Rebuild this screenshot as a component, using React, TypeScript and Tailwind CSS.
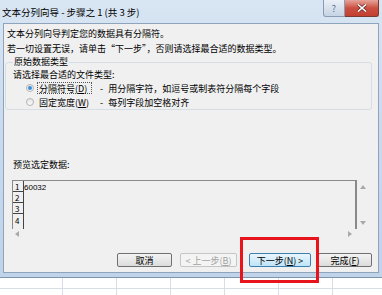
import React from 'react';

const FONT = "font-['Noto_Sans_CJK_SC','Liberation_Sans',sans-serif]";

const Key = ({ k }: { k: string }) => (
  <span>
    (<span className="underline underline-offset-1">{k}</span>)
  </span>
);

const Btn = ({ w, kind, children }: { w: string; kind: 'normal' | 'off' | 'hot'; children: React.ReactNode }) => {
  const styles = {
    normal: 'border-[#707070] bg-gradient-to-b from-[#f4f4f4] to-[#dcdcdc] text-black',
    off: 'border-[#c6c6c6] bg-[#f4f4f4] text-[#a3a3a3]',
    hot: 'border-[#3c7fb1] bg-gradient-to-b from-[#eaf6fd] to-[#bee4f8] text-black',
  };
  return (
    <div
      className={`${w} h-[14px] rounded-[2px] border flex items-center justify-center text-[9px] leading-none ${styles[kind]}`}
    >
      {children}
    </div>
  );
};

const Radio = ({ on }: { on?: boolean }) => (
  <div className="w-[8px] h-[8px] rounded-full border border-[#b4b4b4] bg-gradient-to-b from-[#e6e6e6] to-[#fafafa] flex items-center justify-center">
    {on && <div className="w-[4px] h-[4px] rounded-full bg-[#3c8fdc]" />}
  </div>
);

const Tri = ({ dir }: { dir: 'up' | 'down' | 'left' | 'right' }) => {
  const pts = {
    up: '0,4 3,0 6,4',
    down: '0,0 3,4 6,0',
    left: '4,0 0,3 4,6',
    right: '0,0 4,3 0,6',
  };
  const vertical = dir === 'up' || dir === 'down';
  return (
    <svg width={vertical ? 6 : 4} height={vertical ? 4 : 6}>
      <polygon points={pts[dir]} fill="#a9a9a9" />
    </svg>
  );
};

export default function App() {
  const rows = ['1', '2', '3', '4'];
  return (
    <div className={`relative w-[382px] h-[295px] overflow-hidden bg-white text-black ${FONT}`}>
      {/* Dialog window */}
      <div className="h-[278px] flex flex-col bg-gradient-to-b from-[#d8e5f3] via-[#c9daed] to-[#bfd3e9] border-b border-[#7f95ad]">
        {/* Title bar */}
        <div className="h-[23px] flex items-start shrink-0">
          <div className="pl-[2px] pt-[6px] text-[9.5px] leading-[12px] whitespace-nowrap">
            文本分列向导 - 步骤之 1 (共 3 步)
          </div>
          <div className="ml-auto mr-[3px] flex">
            <div className="w-[22px] h-[17px] rounded-bl-[3px] border border-t-0 border-[#8a9cb2] bg-gradient-to-b from-[#eaf0f7] to-[#c6d4e4] flex items-center justify-center text-[9px] text-[#5a6f88] leading-none">
              ?
            </div>
            <div className="w-[34px] h-[17px] rounded-br-[3px] border border-t-0 border-l-0 border-[#7a3a34] bg-gradient-to-b from-[#e4a39a] via-[#cb4f42] to-[#c33f30] flex items-center justify-center">
              <svg width="10" height="8" viewBox="0 0 10 8">
                <path d="M1 0.5 L9 7.5 M9 0.5 L1 7.5" stroke="#6b2a24" strokeWidth="3" />
                <path d="M1 0.5 L9 7.5 M9 0.5 L1 7.5" stroke="#fff" strokeWidth="1.6" />
              </svg>
            </div>
          </div>
        </div>

        {/* Client area */}
        <div className="flex-1 mx-[3px] mb-[4px] bg-[#f0f0f0] border border-[#8ea4bc] flex flex-col text-[9px]">
          <div className="pt-[2px] pl-[3px] leading-[15px]">
            <div>文本分列向导判定您的数据具有分隔符。</div>
            <div>若一切设置无误，请单击“下一步”，否则请选择最合适的数据类型。</div>
          </div>

          <fieldset className="ml-[1px] w-[367px] border border-[#d5dfe5] rounded-[3px] pl-[7px] pb-[1px]">
            <legend className="px-[1px] leading-[12px]">原始数据类型</legend>
            <div className="leading-[12px] pt-[1px]">请选择最合适的文件类型:</div>
            <div className="flex items-center h-[12px] mt-[1px]">
              <div className="ml-[13px]">
                <Radio on />
              </div>
              <div className="ml-[3px] w-[55px] h-[12px] border border-dotted border-[#555] flex items-center pl-[1px] leading-none">
                分隔符号
                <Key k="D" />
              </div>
              <div className="ml-[8px] leading-none">-</div>
              <div className="ml-[5px] leading-none">用分隔字符，如逗号或制表符分隔每个字段</div>
            </div>
            <div className="flex items-center h-[12px] mt-[2px]">
              <div className="ml-[13px]">
                <Radio />
              </div>
              <div className="ml-[4px] w-[54px] flex items-center pl-[1px] leading-none">
                固定宽度
                <Key k="W" />
              </div>
              <div className="ml-[8px] leading-none">-</div>
              <div className="ml-[5px] leading-none">每列字段加空格对齐</div>
            </div>
          </fieldset>

          <div className="mt-[49px] ml-[9px] leading-[12px]">预览选定数据:</div>

          {/* Preview */}
          <div className="mt-[9px] ml-[8px] w-[357px] h-[59px] grid grid-cols-[345px_12px] grid-rows-[49px_10px]">
            <div className="border-t border-l border-r-2 border-[#8a8a8a] bg-[#f0f0f0] flex overflow-hidden">
              <div className="w-[11px] shrink-0 border-r border-[#444] flex flex-col">
                {rows.map((r, i) => (
                  <div
                    key={r}
                    className={`h-[11px] shrink-0 flex items-end pl-[2px] text-[8px] leading-[9px] ${i < 3 ? 'border-b border-[#444]' : ''}`}
                  >
                    {r}
                  </div>
                ))}
              </div>
              <div className="pt-[2px] text-[8px] leading-[9px] font-['Liberation_Sans',sans-serif]">60032</div>
            </div>
            <div className="flex flex-col items-center justify-between pt-[5px] pb-[4px]">
              <Tri dir="up" />
              <Tri dir="down" />
            </div>
            <div className="flex items-center justify-between px-[3px] pr-[5px]">
              <Tri dir="left" />
              <Tri dir="right" />
            </div>
            <div />
          </div>

          <div className="mt-[14px] flex justify-end pr-[6px]">
            <Btn w="w-[55px]" kind="normal">取消</Btn>
            <div className="ml-[8px]">
              <Btn w="w-[57px]" kind="off">
                &lt; 上一步<Key k="B" />
              </Btn>
            </div>
            <div className="ml-[12px]">
              <Btn w="w-[62px]" kind="hot">
                下一步<Key k="N" />&nbsp;&gt;
              </Btn>
            </div>
            <div className="ml-[7px]">
              <Btn w="w-[54px]" kind="normal">
                完成<Key k="F" />
              </Btn>
            </div>
          </div>
        </div>
      </div>

      {/* Spreadsheet behind */}
      <div className="flex h-[11px] border-b border-[#d9dde6]">
        <div className="w-[63px] border-r border-[#d9dde6]" />
        <div className="w-[54px] border-r border-[#d9dde6]" />
        <div className="w-[54px] border-r border-[#d9dde6]" />
        <div className="w-[54px] border-r border-[#d9dde6]" />
        <div className="w-[54px] border-r border-[#d9dde6]" />
        <div className="w-[54px] border-r border-[#d9dde6]" />
      </div>
      <div className="flex h-[6px]">
        <div className="w-[63px] border-r border-[#d9dde6]" />
        <div className="w-[54px] border-r border-[#d9dde6]" />
        <div className="w-[54px] border-r border-[#d9dde6]" />
        <div className="w-[54px] border-r border-[#d9dde6]" />
        <div className="w-[54px] border-r border-[#d9dde6]" />
        <div className="w-[54px] border-r border-[#d9dde6]" />
      </div>

      {/* Red highlight */}
      <div className="absolute left-[240px] top-[237px] w-[79px] h-[46px] border-[3px] border-[#e8141c]" />
    </div>
  );
}
